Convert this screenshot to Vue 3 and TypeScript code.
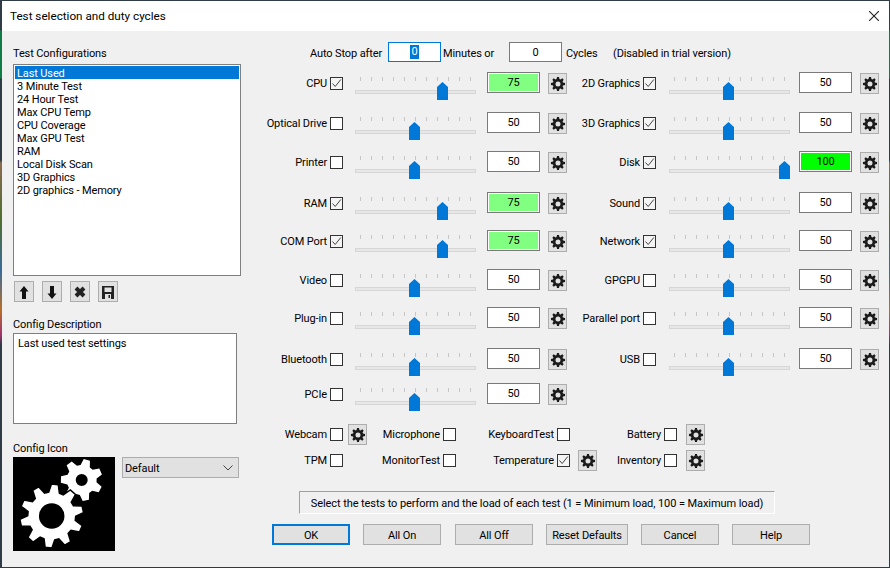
<script setup lang="ts">
interface TestRow {
  name: string
  on: boolean
  value: number
}

const configs = [
  'Last Used',
  '3 Minute Test',
  '24 Hour Test',
  'Max CPU Temp',
  'CPU Coverage',
  'Max GPU Test',
  'RAM',
  'Local Disk Scan',
  '3D Graphics',
  '2D graphics - Memory'
]

// listed row by row: left column, right column
const tests: TestRow[] = [
  { name: 'CPU', on: true, value: 75 },
  { name: '2D Graphics', on: true, value: 50 },
  { name: 'Optical Drive', on: false, value: 50 },
  { name: '3D Graphics', on: true, value: 50 },
  { name: 'Printer', on: false, value: 50 },
  { name: 'Disk', on: true, value: 100 },
  { name: 'RAM', on: true, value: 75 },
  { name: 'Sound', on: true, value: 50 },
  { name: 'COM Port', on: true, value: 75 },
  { name: 'Network', on: true, value: 50 },
  { name: 'Video', on: false, value: 50 },
  { name: 'GPGPU', on: false, value: 50 },
  { name: 'Plug-in', on: false, value: 50 },
  { name: 'Parallel port', on: false, value: 50 },
  { name: 'Bluetooth', on: false, value: 50 },
  { name: 'USB', on: false, value: 50 },
  { name: 'PCIe', on: false, value: 50 }
]

const extras = [
  { name: 'Webcam', on: false, gear: true },
  { name: 'Microphone', on: false, gear: false },
  { name: 'KeyboardTest', on: false, gear: false },
  { name: 'Battery', on: false, gear: true },
  { name: 'TPM', on: false, gear: false },
  { name: 'MonitorTest', on: false, gear: false },
  { name: 'Temperature', on: true, gear: true },
  { name: 'Inventory', on: false, gear: true }
]

const buttons = ['OK', 'All On', 'All Off', 'Reset Defaults', 'Cancel', 'Help']
const ticks = Array.from({ length: 11 }, (_, i) => i)

function thumbLeft(value: number) {
  return Math.round(((value - 1) / 99) * 110) + 'px'
}

function gearPath(cx: number, cy: number, outer: number, root: number, hole: number, teeth: number, start = 0) {
  const step = (Math.PI * 2) / teeth
  const pts: string[] = []
  const at = (r: number, a: number) => `${(cx + Math.sin(a) * r).toFixed(2)} ${(cy - Math.cos(a) * r).toFixed(2)}`
  for (let i = 0; i < teeth; i++) {
    const a = start + i * step
    pts.push(at(root, a - step * 0.36), at(outer, a - step * 0.17), at(outer, a + step * 0.17), at(root, a + step * 0.36))
  }
  const ring = `M${cx - hole} ${cy}a${hole} ${hole} 0 1 0 ${hole * 2} 0a${hole} ${hole} 0 1 0 ${-hole * 2} 0z`
  return 'M' + pts.join('L') + 'z' + ring
}

const smallGear = gearPath(8, 8, 7.1, 5.2, 2.5, 8)
const bigCog = gearPath(38.7, 59, 32, 24, 12, 10, 0.1)
const littleCog = gearPath(68.7, 23, 21, 15, 6, 7, 0.25)
</script>

<template>
  <div class="screen">
    <div class="window">
      <div class="titlebar">
        <span class="title">Test selection and duty cycles</span>
        <svg class="close" width="10" height="10" viewBox="0 0 10 10">
          <path d="M0 0L10 10M10 0L0 10" stroke="#222" stroke-width="1.1" fill="none" />
        </svg>
      </div>

      <div class="body">
        <div class="left">
          <div class="caption">Test Configurations</div>
          <div class="list">
            <div v-for="(c, i) in configs" :key="c" class="list-item" :class="{ selected: i === 0 }">{{ c }}</div>
          </div>
          <div class="tools">
            <div class="btn tool">
              <svg width="18" height="19" viewBox="0 0 18 19"><path d="M9 4L13.5 9.5H11V17H7V9.5H4.500z" fill="#111" /></svg>
            </div>
            <div class="btn tool">
              <svg width="18" height="19" viewBox="0 0 18 19"><path d="M9 17L13.500 11.500H11V4H7V11.500H4.500z" fill="#111" /></svg>
            </div>
            <div class="btn tool">
              <svg width="18" height="19" viewBox="0 0 18 19"><path d="M5 6L13 14M13 6L5 14" stroke="#222" stroke-width="4" fill="none" /></svg>
            </div>
            <div class="btn tool">
              <svg width="18" height="19" viewBox="0 0 18 19">
                <path fill-rule="evenodd" fill="#222" d="M3 4H15V17H3zM5.500 5.500V10H12.500V5.500zM6 12V17H12V12z" />
                <rect x="9.500" y="13" width="1.500" height="3" fill="#222" />
              </svg>
            </div>
          </div>
          <div class="caption desc-caption">Config Description</div>
          <div class="desc">Last used test settings</div>
          <div class="caption icon-caption">Config Icon</div>
          <div class="icon-row">
            <svg class="config-icon" width="102" height="94" viewBox="0 0 102 94">
              <rect width="102" height="94" fill="#000" />
              <path :d="littleCog" fill="#fff" fill-rule="evenodd" />
              <path :d="bigCog" fill="#fff" fill-rule="evenodd" stroke="#000" stroke-width="1.500" />
            </svg>
            <div class="select">
              <span class="select-text">Default</span>
              <svg width="10" height="6" viewBox="0 0 10 6"><path d="M.5.500L5 5L9.500.500" stroke="#444" fill="none" /></svg>
            </div>
          </div>
        </div>

        <div class="right">
          <div class="autostop">
            <span class="as-label">Auto Stop after</span>
            <div class="field focused"><span class="sel">0</span></div>
            <span class="as-minutes">Minutes or</span>
            <div class="field">0</div>
            <span class="as-cycles">Cycles</span>
            <span class="as-note">(Disabled in trial version)</span>
          </div>

          <div class="tests">
            <div v-for="t in tests" :key="t.name" class="test">
              <span class="test-label">{{ t.name }}</span>
              <span class="check" :class="{ on: t.on }">
                <svg v-if="t.on" width="11" height="11" viewBox="0 0 11 11"><path d="M1.500 5.500L4.200 8.500L9.800 1.500" stroke="#444" fill="none" /></svg>
              </span>
              <div class="slider">
                <div class="ticks"><i v-for="n in ticks" :key="n"></i></div>
                <div class="track"></div>
                <div class="thumb" :style="{ left: thumbLeft(t.value) }"></div>
              </div>
              <div class="field value" :class="{ warm: t.value === 75, hot: t.value === 100 }">{{ t.value }}</div>
              <div class="btn gear">
                <svg width="16" height="16" viewBox="0 0 16 16"><path :d="smallGear" fill="#1a1a1a" fill-rule="evenodd" /></svg>
              </div>
            </div>
          </div>

          <div class="extras">
            <div v-for="e in extras" :key="e.name" class="extra">
              <span class="extra-label">{{ e.name }}</span>
              <span class="check" :class="{ on: e.on }">
                <svg v-if="e.on" width="11" height="11" viewBox="0 0 11 11"><path d="M1.500 5.500L4.200 8.500L9.800 1.500" stroke="#444" fill="none" /></svg>
              </span>
              <div v-if="e.gear" class="btn gear">
                <svg width="16" height="16" viewBox="0 0 16 16"><path :d="smallGear" fill="#1a1a1a" fill-rule="evenodd" /></svg>
              </div>
            </div>
          </div>

          <div class="status">Select the tests to perform and the load of each test (1 = Minimum load, 100 = Maximum load)</div>

          <div class="actions">
            <div v-for="(b, i) in buttons" :key="b" class="btn action" :class="{ primary: i === 0, wide: b === 'Reset Defaults' }">{{ b }}</div>
          </div>
        </div>
      </div>
    </div>
  </div>
</template>

<style>
html,
body {
  margin: 0;
  background: #2f3b46;
}
</style>

<style scoped>
.screen {
  width: 890px;
  height: 568px;
  box-sizing: border-box;
  padding: 1px 1px 1px 2px;
  overflow: hidden;
  background: linear-gradient(
    to bottom,
    #2f3b46 0,
    #2f3b46 30px,
    #0f7d45 31px,
    #0f7d45 78px,
    #2f3b46 79px,
    #2f3b46 160px,
    #8a6a50 163px,
    #4f6f30 220px,
    #3a6a9a 270px,
    #b5702a 310px,
    #a03070 335px,
    #2f3b46 345px
  );
  font-family: Roboto, "Noto Sans", sans-serif;
  font-size: 11px;
  letter-spacing: -0.12px;
  color: #000;
  white-space: nowrap;
}

.window {
  width: 887px;
  height: 566px;
  display: flex;
  flex-direction: column;
  background: #f0f0f0;
}

.titlebar {
  height: 30px;
  flex: none;
  display: flex;
  align-items: center;
  justify-content: space-between;
  padding: 0 10px 0 8px;
  background: #fff;
}

.title {
  font-size: 11.7px;
  letter-spacing: 0;
}

.body {
  flex: 1;
  display: flex;
}

.left {
  width: 263px;
  flex: none;
  box-sizing: border-box;
  padding: 15px 0 0 11px;
}

.caption {
  height: 14px;
  line-height: 16px;
}

.list {
  width: 228px;
  height: 212px;
  box-sizing: border-box;
  margin-top: 4px;
  padding: 1px;
  border: 1px solid #7f7f7f;
  background: #fff;
}

.list-item {
  height: 13px;
  line-height: 15px;
  padding-left: 2px;
}

.list-item.selected {
  background: #0078d7;
  color: #fff;
}

.tools {
  display: flex;
  gap: 8px;
  margin: 5px 0 0 1px;
}

.btn {
  box-sizing: border-box;
  display: flex;
  align-items: center;
  justify-content: center;
  border: 1px solid #adadad;
  background: #e1e1e1;
}

.tool {
  width: 20px;
  height: 21px;
}

.desc-caption {
  margin-top: 15px;
}

.desc {
  width: 224px;
  height: 91px;
  box-sizing: border-box;
  margin-top: 2px;
  padding: 3px 4px;
  line-height: 14px;
  border: 1px solid #7f7f7f;
  background: #fff;
}

.icon-caption {
  margin-top: 17px;
}

.icon-row {
  display: flex;
  align-items: flex-start;
  gap: 7px;
  margin-top: 2px;
}

.config-icon {
  display: block;
}

.select {
  width: 117px;
  height: 21px;
  box-sizing: border-box;
  display: flex;
  align-items: center;
  justify-content: space-between;
  padding: 0 5px 0 2px;
  border: 1px solid #adadad;
  background: #e1e1e1;
}

.select-text {
  padding-top: 2px;
}

.right {
  flex: 1;
  padding-top: 11px;
}

.autostop {
  display: flex;
  align-items: center;
  height: 20px;
  padding-left: 45px;
}

.autostop > span {
  padding-top: 2px;
}

.as-label {
  width: 78px;
}

.as-minutes {
  width: 66px;
  margin-left: 2px;
}

.as-cycles {
  width: 47px;
  margin-left: 4px;
}

.field {
  width: 53px;
  height: 20px;
  box-sizing: border-box;
  display: flex;
  align-items: center;
  justify-content: center;
  border: 1px solid #7a7a7a;
  background: #fff;
}

.field.focused {
  border-color: #0078d7;
}

.sel {
  padding: 0 1px;
  line-height: 14px;
  background: #0078d7;
  color: #fff;
}

.tests {
  display: grid;
  grid-template-columns: repeat(2, 313px);
  grid-template-rows: 40px 39px 41px 38px 39px 38px 41px 35px 41px;
  margin-top: 10px;
}

.test {
  display: flex;
  align-items: flex-start;
}

.test-label {
  width: 62px;
  margin-top: 2px;
  line-height: 20px;
  text-align: right;
}

.check {
  width: 13px;
  height: 13px;
  flex: none;
  box-sizing: border-box;
  display: flex;
  align-items: center;
  justify-content: center;
  border: 1px solid #333;
  background: #fff;
}

.check.on {
  background: #f4f4f4;
}

.test .check {
  margin: 5px 0 0 3px;
}

.slider {
  position: relative;
  width: 121px;
  height: 28px;
  flex: none;
  margin: 5px 0 0 12px;
}

.test:nth-child(even) .slider {
  margin-left: 13px;
}

.ticks {
  display: flex;
  gap: 10px;
  padding-left: 5px;
}

.ticks i {
  display: block;
  width: 1px;
  height: 4px;
  background: #c6c6c6;
}

.track {
  height: 4px;
  box-sizing: border-box;
  margin-top: 9px;
  border: 1px solid #d6d6d6;
  background: #e7e7e7;
}

.thumb {
  position: absolute;
  top: 5px;
  width: 11px;
  height: 18px;
  background: #0078d7;
  clip-path: polygon(50% 0, 100% 28%, 100% 100%, 0 100%, 0 28%);
}

.value {
  height: 21px;
  flex: none;
  margin-left: 11px;
}

.test:nth-child(even) .value {
  margin-left: 9px;
}

.value.warm {
  background: #80ff80;
  box-shadow: inset 0 0 0 1px #fff;
}

.value.hot {
  background: #00ff00;
  box-shadow: inset 0 0 0 1px #fff;
}

.gear {
  width: 19px;
  height: 21px;
  flex: none;
}

.test .gear {
  margin: 1px 0 0 8px;
}

.extras {
  display: grid;
  grid-template-columns: 103px 88px 141px 108px;
  grid-auto-rows: 21px;
  row-gap: 5px;
}

.extra {
  display: flex;
  align-items: center;
}

.extra-label {
  text-align: right;
}

.extra:nth-child(4n + 1) .extra-label {
  width: 62px;
}

.extra:nth-child(4n + 2) .extra-label {
  width: 72px;
}

.extra:nth-child(4n + 3) .extra-label {
  width: 98px;
}

.extra:nth-child(4n + 4) .extra-label {
  width: 64px;
}

.extra .check {
  margin-left: 3px;
}

.extra:nth-child(4n + 1) .gear {
  margin-left: 5px;
}

.extra:nth-child(4n + 3) .gear {
  margin-left: 8px;
}

.extra:nth-child(4n + 4) .gear {
  margin-left: 9px;
}

.status {
  width: 476px;
  height: 23px;
  box-sizing: border-box;
  margin: 20px 0 0 34px;
  line-height: 23px;
  letter-spacing: -0.08px;
  text-align: center;
  white-space: nowrap;
  border: 1px solid;
  border-color: #a0a0a0 #fff #fff #a0a0a0;
}

.actions {
  display: flex;
  gap: 13px;
  margin: 10px 0 0 7px;
}

.action {
  width: 78px;
  height: 21px;
  padding-top: 2px;
}

.action:nth-child(3) {
  margin-left: 1px;
}

.action.wide {
  width: 82px;
}

.action.primary {
  border: 2px solid #0078d7;
}
</style>
